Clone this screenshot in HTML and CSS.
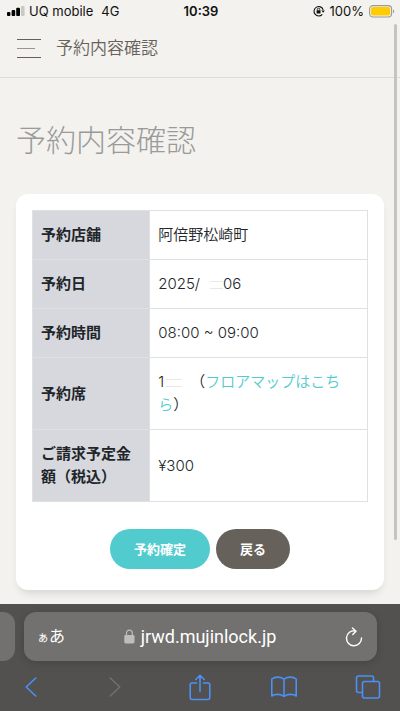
FILE: index.html
```html
<!DOCTYPE html>
<html lang="ja">
<head>
<meta charset="utf-8">
<meta name="viewport" content="width=device-width, initial-scale=1">
<title>予約内容確認</title>
<link rel="stylesheet" href="styles.css">
</head>
<body>
<div class="status">
  <div class="status-left">
    <svg width="18" height="10" viewBox="0 0 18 10" aria-hidden="true"><rect x="0" y="6" width="3.4" height="4" rx="1"/><rect x="4.6" y="4" width="3.6" height="6" rx="1"/><rect x="9.2" y="1.8" width="3.8" height="8.2" rx="1"/><rect x="14" y="0" width="3.6" height="10" rx="1" fill="#c9c9c7"/></svg>
    <span class="carrier">UQ mobile</span>
    <span>4G</span>
  </div>
  <time class="clock">10:39</time>
  <div class="status-right">
    <svg width="12" height="12" viewBox="0 0 12 12" fill="none" stroke="#111" stroke-width="1.1" aria-hidden="true"><path d="M9.3 9.3A4.7 4.7 0 1 1 10.2 4.8"/><path d="M8.3 5.4h3.5L10.2 7.8z" fill="#111" stroke="none"/><rect x="3.6" y="5.2" width="3.9" height="3.2" rx=".5" fill="#111" stroke="none"/><path d="M4.3 5.4V4.5a1.25 1.25 0 0 1 2.5 0v.9" stroke-width=".9"/></svg>
    <span class="percent">100%</span>
    <svg width="26" height="13" viewBox="0 0 26 13" aria-hidden="true"><rect x=".6" y=".6" width="22" height="11.4" rx="3.4" fill="none" stroke="#999" stroke-width="1.1"/><rect x="2" y="2" width="19.2" height="8.6" rx="2" fill="#fc0"/><path d="M24 4.5c1.6.7 1.6 3 0 3.8z" fill="#999"/></svg>
  </div>
</div>
<header class="header">
  <button class="menu" aria-label="メニュー">
    <svg width="24" height="19" viewBox="0 0 24 19" fill="none" stroke="#66615b"><path d="M0 .5h24M0 18.5h24"/><path d="M0 9.5h18" stroke="#99958f"/></svg>
  </button>
  <span class="header-title">予約内容確認</span>
</header>
<main class="main">
  <h1 class="title">予約内容確認</h1>
  <section class="card">
    <table class="details">
      <tr><th scope="row">予約店舗</th><td>阿倍野松崎町</td></tr>
      <tr><th scope="row">予約日</th><td>2025/<span class="redacted date"></span>06</td></tr>
      <tr><th scope="row">予約時間</th><td>08:00 ~ 09:00</td></tr>
      <tr><th scope="row">予約席</th><td>1<span class="redacted seat"></span>（<a href="#map">フロアマップはこちら</a>）</td></tr>
      <tr><th scope="row">ご請求予定金額（税込）</th><td>¥300</td></tr>
    </table>
    <div class="actions">
      <button class="button primary">予約確定</button>
      <button class="button">戻る</button>
    </div>
  </section>
</main>
<footer class="browser">
  <div class="tabs">
    <div class="previous-tab"></div>
    <div class="address">
      <button class="text-size" aria-label="表示設定"><small>ぁ</small>あ</button>
      <div class="site">
        <svg width="11" height="15" viewBox="0 0 11 15" aria-hidden="true"><rect x=".3" y="6" width="10.2" height="8.4" rx="1.4" fill="#bdbdc0"/><path d="M2.5 6.5V4a2.9 2.9 0 0 1 5.8 0v2.5" fill="none" stroke="#bdbdc0" stroke-width="1.2"/></svg>
        <span>jrwd.mujinlock.jp</span>
      </div>
      <button class="reload" aria-label="再読み込み"><svg width="18" height="20" viewBox="0 0 18 20" fill="none" stroke="#fff" stroke-width="1.4" stroke-linecap="round" stroke-linejoin="round"><path d="M10.3 3.9A7.5 7.5 0 1 0 16.5 11M7.5 .9l3.5 3.3-3.2 3.2"/></svg></button>
    </div>
    <div class="next-tab"></div>
  </div>
  <nav class="tools">
    <button aria-label="戻る"><svg width="12" height="20" viewBox="0 0 12 20"><path d="M10.7 1L1.2 10l9.5 9"/></svg></button>
    <button class="disabled" aria-label="進む" disabled><svg width="12" height="20" viewBox="0 0 12 20"><path d="M1.2 1l9.5 9-9.5 9"/></svg></button>
    <button aria-label="共有"><svg width="22" height="27" viewBox="0 0 22 27"><path d="M7.5 9H3.2a2 2 0 0 0-2 2v12.500a2 2 0 0 0 2 2h15.600a2 2 0 0 0 2-2V11a2 2 0 0 0-2-2H14.500M11 17.500V1.300M6.800 5.500L11 1.300l4.200 4.200"/></svg></button>
    <button aria-label="ブックマーク"><svg width="28" height="22" viewBox="0 0 28 22"><path d="M14 3.300C11.500.5 5 .3 1.800 3v17c3.200-2.400 9.300-2 12.200.5 2.900-2.500 9-2.900 12.200-.5V3C23 .3 16.500.5 14 3.300zm0 0v17.200"/></svg></button>
    <button aria-label="タブ"><svg width="26" height="24" viewBox="0 0 26 24"><path d="M7 17.500H3.500a2 2 0 0 1-2-2V3a2 2 0 0 1 2-2h13a2 2 0 0 1 2 2v3"/><rect x="7.500" y="6.500" width="17" height="16.500" rx="2"/></svg></button>
  </nav>
</footer>
<div class="scrollbar"></div>
</body>
</html>
```

FILE: styles.css
```css
* {
  box-sizing: border-box;
}

body {
  margin: 0;
  min-height: 100vh;
  display: flex;
  flex-direction: column;
  background: #f3f2ee;
  color: #212529;
  font-family: Inter, "Noto Sans CJK JP", sans-serif;
  font-size: 15px;
  line-height: 23px;
}

button {
  padding: 0;
  border: 0;
  background: none;
  color: inherit;
  font: inherit;
}

svg {
  display: block;
}

.status {
  display: grid;
  grid-template-columns: 1fr auto 1fr;
  align-items: center;
  height: 22px;
  padding: 0 5px 0 7px;
  color: #111;
  font-size: 13px;
  line-height: 22px;
}

.status-left,
.status-right {
  display: flex;
  align-items: center;
}

.carrier {
  margin: 0 8px 0 4px;
}

.clock {
  font-weight: 600;
}

.status-right {
  justify-content: flex-end;
  gap: 5px;
}

.header {
  display: flex;
  align-items: center;
  gap: 15px;
  height: 56px;
  padding: 0 17px 2px;
  border-bottom: 1px solid #dddcd9;
}

.header-title {
  color: #66615b;
  font-size: 17px;
  font-weight: 350;
}

.main {
  padding: 40px 16px 14px;
}

.title {
  margin: 0 0 32px;
  color: #9a9a9a;
  font-size: 30px;
  font-weight: 300;
  line-height: 44px;
}

.card {
  padding: 16px 16px 21px;
  border-radius: 12px;
  background: #fff;
  box-shadow: 0 6px 10px -4px rgba(0, 0, 0, 0.15);
}

.details {
  width: 100%;
  border: 1px solid #dee2e6;
  border-collapse: collapse;
  table-layout: fixed;
}

.details th,
.details td {
  padding: 12px 8px 13px;
  border: 1px solid #dee0e2;
  text-align: left;
  vertical-align: middle;
}

.details th {
  width: 35%;
  background: #d6d8dd;
  font-weight: 700;
}

.details td {
  font-weight: 350;
}

.details a {
  color: #51cbce;
  text-decoration: none;
}

.redacted {
  display: inline-block;
  height: 8px;
  border: solid #e8e8e8;
  border-width: 1px 0;
}

.date {
  width: 13px;
  margin-left: 10px;
}

.seat {
  width: 16px;
  margin: 0 8px 0 2px;
}

.actions {
  display: flex;
  justify-content: center;
  gap: 6px;
  margin-top: 27px;
}

.button {
  height: 40px;
  padding: 0 24px;
  border-radius: 20px;
  background: #66615b;
  color: #fff;
  font-size: 13px;
  font-weight: 600;
}

.primary {
  background: #51cbce;
}

.browser {
  flex: 1;
  background: #52514f;
  color: #fff;
}

.tabs {
  display: flex;
  gap: 9px;
  padding-top: 8px;
}

.previous-tab {
  width: 15px;
  border-radius: 0 12px 12px 0;
  background: #72716f;
}

.next-tab {
  width: 14px;
}

.address {
  flex: 1;
  display: grid;
  grid-template-columns: 1fr auto 1fr;
  align-items: center;
  height: 49px;
  padding: 0 14px 0 13px;
  border-radius: 12px;
  background: #72716f;
  box-shadow: 0 2px 8px rgba(0, 0, 0, 0.15);
}

.text-size {
  justify-self: start;
  font-size: 16px;
}

.text-size small {
  font-size: 12px;
}

.reload {
  justify-self: end;
}

.site {
  display: flex;
  align-items: center;
  gap: 6px;
  font-family: Roboto, sans-serif;
  font-size: 18px;
}

.tools {
  display: flex;
  align-items: center;
  justify-content: space-between;
  height: 52px;
  padding: 0 18px 0 17px;
}

.tools button {
  display: flex;
  justify-content: center;
  width: 28px;
}

.tools svg {
  fill: none;
  stroke: #4a90f5;
  stroke-width: 1.6;
  stroke-linecap: round;
  stroke-linejoin: round;
}

.tools .disabled svg {
  stroke: #71706e;
}

.scrollbar {
  position: absolute;
  top: 24px;
  right: 3px;
  width: 3px;
  height: 516px;
  border-radius: 2px;
  background: #c5c4c1;
}
```
